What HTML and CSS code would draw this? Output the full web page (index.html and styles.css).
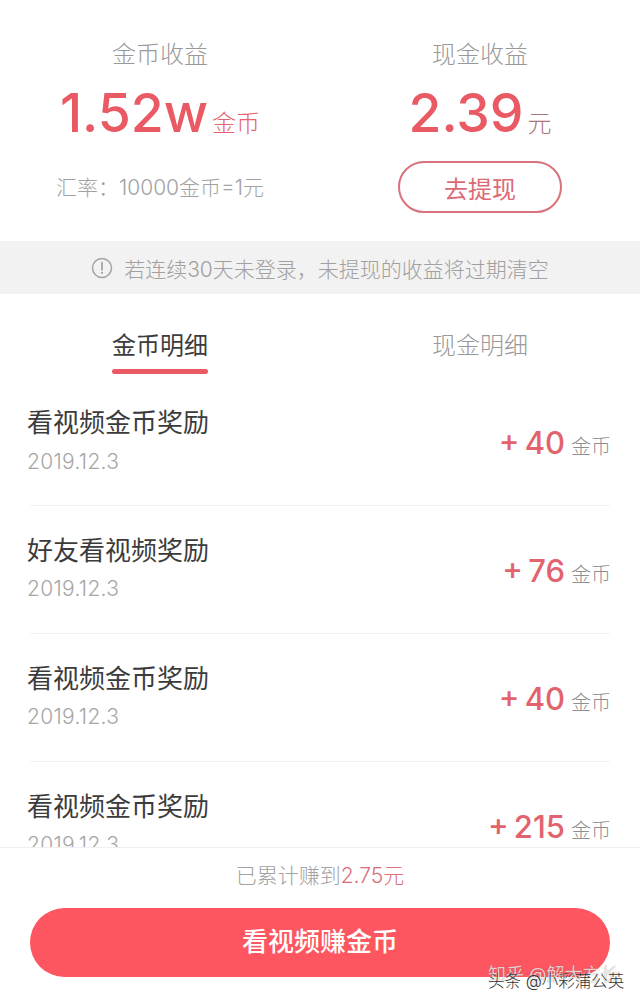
FILE: index.html
```html
<!DOCTYPE html>
<html lang="zh">
<head>
<meta charset="utf-8">
<title>收益</title>
<link rel="stylesheet" href="styles.css">
</head>
<body>
<div class="page">
  <section class="summary">
    <div class="col">
      <div class="label">金币收益</div>
      <div class="value"><span class="big">1.52w</span><span class="unit">金币</span></div>
      <div class="rate">汇率：10000金币=1元</div>
    </div>
    <div class="col">
      <div class="label">现金收益</div>
      <div class="value"><span class="big">2.39</span><span class="unit">元</span></div>
      <div class="withdraw">去提现</div>
    </div>
  </section>
  <div class="notice">
    <svg class="notice-icon" viewBox="0 0 22 22" width="22" height="22"><circle cx="11" cy="11" r="9.5" fill="none" stroke="#a3a3a3" stroke-width="1.5"/><path d="M11 5.6v7.2" stroke="#a3a3a3" stroke-width="1.8" stroke-linecap="round"/><circle cx="11" cy="15.8" r="1.1" fill="#a3a3a3"/></svg>
    <span>若连续30天未登录，未提现的收益将过期清空</span>
  </div>
  <div class="tabs">
    <div class="tab active">金币明细</div>
    <div class="tab">现金明细</div>
  </div>
  <div class="list">
    <div class="row">
      <div><div class="title">看视频金币奖励</div><div class="date">2019.12.3</div></div>
      <div class="amount"><span class="num">+ 40</span><span class="coin">金币</span></div>
    </div>
    <div class="row">
      <div><div class="title">好友看视频奖励</div><div class="date">2019.12.3</div></div>
      <div class="amount"><span class="num">+ 76</span><span class="coin">金币</span></div>
    </div>
    <div class="row">
      <div><div class="title">看视频金币奖励</div><div class="date">2019.12.3</div></div>
      <div class="amount"><span class="num">+ 40</span><span class="coin">金币</span></div>
    </div>
    <div class="row">
      <div><div class="title">看视频金币奖励</div><div class="date">2019.12.3</div></div>
      <div class="amount"><span class="num">+ 215</span><span class="coin">金币</span></div>
    </div>
  </div>
  <footer class="footer">
    <div class="total">已累计赚到<em>2.75元</em></div>
    <div class="cta">看视频赚金币</div>
  </footer>
  <div class="mark mark-a">知乎 @解大方长</div>
  <div class="mark mark-b">头条 @小彩蒲公英</div>
</div>
</body>
</html>
```

FILE: styles.css
```css
* { box-sizing: border-box; }
html, body { margin: 0; padding: 0; background: #fff; }
body { font-family: "Inter", "Noto Sans CJK SC", sans-serif; }
.page { position: relative; width: 640px; height: 1004px; overflow: hidden; background: #fff; }

.summary { height: 241px; display: grid; grid-template-columns: 320px 320px; }
.col { display: flex; flex-direction: column; align-items: center; padding-top: 38px; }
.label { font-size: 24px; line-height: 34px; color: #999; font-weight: 300; }
.value { display: flex; align-items: baseline; height: 62px; margin-top: 10px; white-space: nowrap; }
.big { font-size: 53.5px; line-height: 62px; font-weight: 500; color: #e95a64; }
.unit { font-size: 24px; margin-left: 4px; color: #e4636c; font-weight: 300; }
.col:nth-child(2) .unit { color: #a8767b; }
.rate { margin-top: 29px; font-size: 21px; line-height: 30px; color: #a2a2a2; font-weight: 300; white-space: nowrap; }
.withdraw { margin-top: 17px; width: 164px; height: 52px; border: 2px solid #d9717b; border-radius: 26px; display: flex; align-items: center; justify-content: center; font-size: 24px; color: #dc6a75; font-weight: 400; }

.notice { height: 53px; background: #f2f2f2; display: flex; align-items: center; justify-content: center; gap: 11px; font-size: 21px; color: #a0a0a0; font-weight: 300; white-space: nowrap; }
.notice-icon { flex: none; }

.tabs { height: 102px; display: grid; grid-template-columns: 320px 320px; padding-top: 33px; }
.tab { position: relative; height: 38px; text-align: center; font-size: 24px; line-height: 38px; color: #999; font-weight: 300; }
.tab.active { color: #3c3c3c; font-weight: 400; }
.tab.active::after { content: ""; position: absolute; left: 112px; top: 42px; width: 96px; height: 5px; border-radius: 3px; background: #e95a64; }

.list { height: 451px; overflow: hidden; padding: 0 30px; }
.row { height: 128px; display: flex; justify-content: space-between; align-items: center; border-bottom: 1px solid #f3f3f3; }
.row:first-child { height: 110px; align-items: flex-start; }
.row:first-child > div:first-child { margin-top: 8px; }
.row:first-child .date { margin-top: 2px; }
.row:first-child .amount { margin-top: 27px; }
.row > div:first-child { margin-left: -3px; }
.title { font-size: 26px; line-height: 38px; color: #3b3b3b; font-weight: 400; }
.date { margin-top: 1px; font-size: 21px; line-height: 36px; color: #a6a6a6; font-weight: 300; letter-spacing: .3px; }
.amount { display: flex; align-items: baseline; white-space: nowrap; margin-top: 3px; margin-right: -1px; }
.num { font-size: 31px; line-height: 40px; color: #e2636d; font-weight: 500; word-spacing: -3px; }
.coin { font-size: 20px; margin-left: 6px; color: #8f8f8f; font-weight: 300; }

.footer { height: 157px; background: #fff; border-top: 1px solid #f0f0f0; padding-top: 14px; }
.total { text-align: center; font-size: 21px; line-height: 28px; color: #a2a2a2; font-weight: 300; }
.total em { font-style: normal; color: #d8707a; }
.cta { margin: 18px 30px 0; height: 69px; border-radius: 35px; background: #fe5660; color: #fff; display: flex; align-items: center; justify-content: center; font-size: 26px; font-weight: 500; padding-bottom: 6px; }

.mark { position: absolute; left: 488px; line-height: 24px; white-space: nowrap; }
.mark-a { top: 963px; font-size: 18px; color: rgba(255,255,255,.75); text-shadow: 0 0 1px rgba(0,0,0,.4); }
.mark-b { top: 969px; font-size: 16.5px; color: #333; text-shadow: 0 0 2px #fff; font-weight: 300; }
```
